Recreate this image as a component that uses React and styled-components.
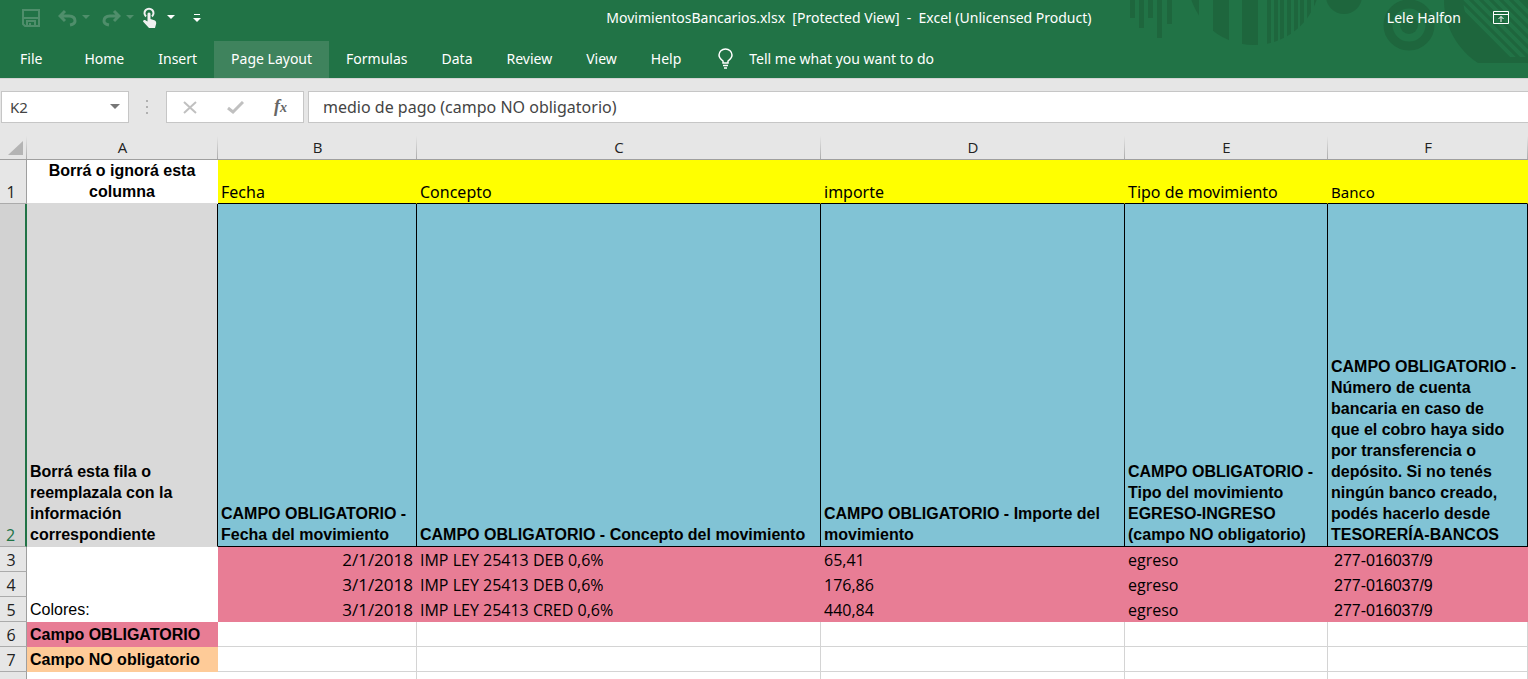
import React from 'react';
import styled, { createGlobalStyle } from 'styled-components';

const columns = ['A', 'B', 'C', 'D', 'E', 'F'];
const tabs = ['File', 'Home', 'Insert', 'Page Layout', 'Formulas', 'Data', 'Review', 'View', 'Help'];
const headings = ['Fecha', 'Concepto', 'importe', 'Tipo de movimiento', 'Banco'];

const hints = [
  'CAMPO OBLIGATORIO - Fecha del movimiento',
  'CAMPO OBLIGATORIO - Concepto del movimiento',
  'CAMPO OBLIGATORIO - Importe del movimiento',
  'CAMPO OBLIGATORIO - Tipo del movimiento EGRESO-INGRESO (campo NO obligatorio)',
  'CAMPO OBLIGATORIO -\nNúmero de cuenta\nbancaria en caso de\nque el cobro haya sido\npor transferencia o\ndepósito. Si no tenés\nningún banco creado,\npodés hacerlo desde\nTESORERÍA-BANCOS',
];

const movements = [
  { row: 3, date: '2/1/2018', concept: 'IMP LEY 25413 DEB 0,6%', amount: '65,41', type: 'egreso', bank: '277-016037/9' },
  { row: 4, date: '3/1/2018', concept: 'IMP LEY 25413 DEB 0,6%', amount: '176,86', type: 'egreso', bank: '277-016037/9' },
  { row: 5, date: '3/1/2018', concept: 'IMP LEY 25413 CRED 0,6%', amount: '440,84', type: 'egreso', bank: '277-016037/9' },
];

const legend = [
  { row: 6, text: 'Campo OBLIGATORIO', fill: '#e87d95' },
  { row: 7, text: 'Campo NO obligatorio', fill: '#fecb98' },
  { row: '', text: '', fill: '#ffffff' },
];

const TitleArt = () => (
  <Art width="400" height="78" viewBox="0 0 400 78" aria-hidden="true">
    <defs>
      <clipPath id="disc"><circle cx="126" cy="-21" r="66" /></clipPath>
      <clipPath id="inner"><path d="M335 0 C337 24 349 42 368 52 L377 57 H400 V0 Z" /></clipPath>
    </defs>
    <g fill="#1e663d">
      <path d="M2 0h5v18h-5z M11 0h5v28h-5z M20 0h5v18h-5z M29 0h5v38h-5z M39 0h5v24h-5z" />
      <path clipPath="url(#disc)" d="M60 0h11v60h-11z M85 0h16v60h-16z M114 0h16v60h-16z M139 0h4v60h-4z M146 0h4v60h-4z M152 0h4v60h-4z M159 0h4v60h-4z M166 0h4v60h-4z M172 0h4v60h-4z M179 0h4v60h-4z M186 0h4v60h-4z" />
      <circle cx="216" cy="-4" r="18" />
      <circle cx="281" cy="25" r="9" />
      <path d="M316 0 C316 27 330 50 350 63 H400 V0 Z" />
    </g>
    <circle cx="281" cy="25" r="21" fill="none" stroke="#1e663d" strokeWidth="9" />
    <g clipPath="url(#inner)" stroke="#217346" strokeWidth="4">
      <path d="M320 -8 L390 62 M330 -8 L400 62 M340 -8 L410 62 M350 -8 L420 62 M360 -8 L430 62 M370 -8 L440 62 M380 -8 L450 62" />
    </g>
  </Art>
);

const Caret = ({ light }) => (
  <svg width="8" height="5" viewBox="0 0 8 5" aria-hidden="true">
    <path d="M0 0h8L4 4z" fill={light ? '#ffffff' : '#4f8e6b'} />
  </svg>
);

const App = () => {
  return (
    <Page>
      <GlobalStyle />
      <Header>
        <TitleArt />
        <TitleBar>
          <QuickAccess>
            <ToolButton aria-label="Save">
              <svg width="18" height="18" viewBox="0 0 18 18" fill="none" stroke="#4f8e6b" strokeWidth="2">
                <path d="M1 1h16v16H3l-2-2z M1 9h16 M5 17v-5h8v5 M8 14v3" />
              </svg>
            </ToolButton>
            <ToolButton aria-label="Undo" $gap="5px" $before="18px">
              <svg width="19" height="18" viewBox="0 0 19 18" fill="none" stroke="#4f8e6b" strokeWidth="3">
                <path d="M7 2 2 7l5 5 M2 7h9q6 0 6 5 0 3-5 4" />
              </svg>
              <Caret />
            </ToolButton>
            <ToolButton aria-label="Redo" $gap="5px" $before="12px">
              <svg width="19" height="18" viewBox="0 0 19 18" fill="none" stroke="#4f8e6b" strokeWidth="3">
                <path d="M12 2l5 5-5 5 M17 7H8q-6 0-6 5 0 3 5 4" />
              </svg>
              <Caret />
            </ToolButton>
            <ToolButton aria-label="Touch mode" $gap="9px" $before="8px">
              <svg width="16" height="22" viewBox="0 0 16 22">
                <path d="M4 9.500a4.500 4.500 0 1 1 6 0" fill="none" stroke="#f0f0f0" strokeWidth="2" />
                <path d="M5.500 6.500q1.500-2 3 0V12l4.500 1.500q1.500 1 1.200 3L13 21H7l-6-6.500q0-2 2-1.500l2.500 1.500z" fill="#f0f0f0" />
              </svg>
              <Caret light />
            </ToolButton>
            <ToolButton aria-label="Customize toolbar" $before="18px">
              <svg width="8" height="8" viewBox="0 0 8 8" fill="#ffffff">
                <path d="M1 0h6v1H1z M0 4h8L4 8z" />
              </svg>
            </ToolButton>
          </QuickAccess>
          <Title>{'MovimientosBancarios.xlsx  [Protected View]  -  Excel (Unlicensed Product)'}</Title>
          <Account>
            <span>Lele Halfon</span>
            <ToolButton aria-label="Ribbon display options">
              <svg width="16" height="13" viewBox="0 0 16 13" fill="none" stroke="#ffffff">
                <path d="M.5.5h15v12H.5z M1 3.500h14 M8 11V5.500 M5.500 8 8 5.500 10.500 8" />
              </svg>
            </ToolButton>
          </Account>
        </TitleBar>
        <Ribbon>
          {tabs.map((tab) => (
            <Tab key={tab} $first={tab === 'File'} $active={tab === 'Page Layout'}>{tab}</Tab>
          ))}
          <TellMe>
            <svg width="15" height="21" viewBox="0 0 15 21" fill="none" stroke="#ffffff">
              <path strokeWidth="1.500" d="M5 15v-2Q1 10 1 7a6.500 6 0 0 1 13 0q0 3-4 6v2z M5 17.500h5 M6 20h3" />
            </svg>
            Tell me what you want to do
          </TellMe>
        </Ribbon>
      </Header>

      <FormulaBar>
        <NameBox>
          <input aria-label="Name box" defaultValue="K2" />
          <svg width="10" height="6" viewBox="0 0 10 6" aria-hidden="true"><path d="M0 0h10L5 5z" fill="#777777" /></svg>
        </NameBox>
        <Grip width="3" height="14" viewBox="0 0 3 14" aria-hidden="true">
          <path d="M0 0h2v2H0z M0 6h2v2H0z M0 12h2v2H0z" fill="#b0b0b0" />
        </Grip>
        <FormulaTools>
          <ToolButton aria-label="Cancel">
            <svg width="14" height="13" viewBox="0 0 14 13" stroke="#c0c0c0" strokeWidth="2"><path d="M1 1l12 11 M13 1 1 12" /></svg>
          </ToolButton>
          <ToolButton aria-label="Enter">
            <svg width="17" height="13" viewBox="0 0 17 13" fill="none" stroke="#c0c0c0" strokeWidth="3"><path d="M1 7l5 4L16 1" /></svg>
          </ToolButton>
          <FunctionButton aria-label="Insert function">f<small>x</small></FunctionButton>
        </FormulaTools>
        <FormulaInput aria-label="Formula" defaultValue="medio de pago (campo NO obligatorio)" />
      </FormulaBar>

      <Sheet>
        <Grid>
          <colgroup>
            <Col $w="27px" />
            <Col $w="191px" />
            <Col $w="199px" />
            <Col $w="404px" />
            <Col $w="304px" />
            <Col $w="203px" />
            <Col />
          </colgroup>
          <thead>
            <tr>
              <Corner>
                <svg width="16" height="15" viewBox="0 0 16 15" aria-hidden="true"><path d="M15 0v14H0z" fill="#b4b4b4" /></svg>
              </Corner>
              {columns.map((c) => <ColHead key={c} scope="col">{c}</ColHead>)}
            </tr>
          </thead>
          <tbody>
            <Row $h="44px">
              <RowHead scope="row">1</RowHead>
              <Note $center $line="#d9d9d9">Borrá o ignorá esta columna</Note>
              {headings.map((h) => <Heading key={h} $small={h === 'Banco'}>{h}</Heading>)}
            </Row>
            <Row $h="343px">
              <RowHead scope="row" $selected>2</RowHead>
              <Note $fill="#d9d9d9" $line="#d9d9d9" $edge="#000000">Borrá esta fila o reemplazala con la información correspondiente</Note>
              {hints.map((h) => <Hint key={h}>{h}</Hint>)}
            </Row>
            {movements.map((m) => (
              <Row key={m.row} $h="25px">
                <RowHead scope="row">{m.row}</RowHead>
                <Plain>{m.row === 5 ? 'Colores:' : ''}</Plain>
                <DateCell>{m.date}</DateCell>
                <Data>{m.concept}</Data>
                <Data>{m.amount}</Data>
                <Data>{m.type}</Data>
                <BankCell>{m.bank}</BankCell>
              </Row>
            ))}
            {legend.map((l) => (
              <Row key={l.fill} $h="25px">
                <RowHead scope="row">{l.row}</RowHead>
                <Note $fill={l.fill} $line={l.fill}>{l.text}</Note>
                {headings.map((h) => <Empty key={h} />)}
              </Row>
            ))}
          </tbody>
        </Grid>
      </Sheet>
    </Page>
  );
};

const GlobalStyle = createGlobalStyle`
*{
  box-sizing: border-box;
}

body{
  margin: 0;
  background-color: #e6e6e6;
}

button, input{
  border: 0;
  padding: 0;
  background: none;
  font: inherit;
  color: inherit;
}
`;

const Page = styled.div`
  height: 100vh;
  display: flex;
  flex-direction: column;
  overflow: hidden;
  font-family: "Noto Sans", "Open Sans", sans-serif;
  font-size: 14px;
`;

const Header = styled.header`
  position: relative;
  background-color: #217346;
  color: #ffffff;
`;

const Art = styled.svg`
  position: absolute;
  top: 0;
  right: 0;
`;

const TitleBar = styled.div`
  position: relative;
  height: 41px;
  padding: 0 19px 6px 22px;
  display: flex;
  align-items: center;
`;

const QuickAccess = styled.div`
  display: flex;
  align-items: center;
`;

const ToolButton = styled.button`
  display: flex;
  align-items: center;
  gap: ${({ $gap }) => $gap || 0};
  margin-left: ${({ $before }) => $before || 0};
`;

const Title = styled.div`
  flex: 1;
  padding-left: 110px;
  text-align: center;
  white-space: pre;
`;

const Account = styled.div`
  display: flex;
  align-items: center;
  gap: 32px;
`;

const Ribbon = styled.nav`
  position: relative;
  height: 37px;
  display: flex;
`;

const Tab = styled.button`
  padding: ${({ $first }) => ($first ? '0 20px 2px' : '0 17px 2px')};
  margin-right: ${({ $first }) => ($first ? '5px' : 0)};
  background-color: ${({ $active }) => ($active ? '#3f835d' : 'transparent')};
`;

const TellMe = styled.button`
  margin-left: 20px;
  padding-bottom: 2px;
  display: flex;
  align-items: center;
  gap: 16px;
`;

const FormulaBar = styled.div`
  height: 58px;
  padding: 12px 0 13px 1px;
  display: flex;
  background-color: #e6e6e6;
  border-top: 1px solid #d4d4d4;
  color: #444444;
`;

const NameBox = styled.div`
  width: 128px;
  padding: 0 8px;
  display: flex;
  align-items: center;
  background-color: #ffffff;
  border: 1px solid #c6c6c6;

  input{
    width: 100%;
    min-width: 0;
    font-size: 15px;
  }

  svg{
    flex: none;
  }
`;

const Grip = styled.svg`
  margin: auto 17px;
`;

const FormulaTools = styled.div`
  width: 138px;
  margin-right: 4px;
  display: flex;
  align-items: center;
  justify-content: space-between;
  padding: 0 16px;
  background-color: #ffffff;
  border: 1px solid #c6c6c6;
`;

const FunctionButton = styled.button`
  font-family: "Liberation Serif", serif;
  font-style: italic;
  font-weight: bold;
  font-size: 18px;
  line-height: 20px;
  color: #666666;

  small{
    font-size: 14px;
  }
`;

const FormulaInput = styled.input`
  flex: 1;
  min-width: 0;
  padding: 0 14px;
  background-color: #ffffff;
  border: 1px solid #c6c6c6;
  border-right: 0;
  font-size: 16px;
`;

const Sheet = styled.main`
  flex: 1;
  min-height: 0;
  overflow: hidden;
  background-color: #ffffff;
`;

const Grid = styled.table`
  width: 100%;
  table-layout: fixed;
  border-collapse: separate;
  border-spacing: 0;
`;

const Col = styled.col`
  width: ${({ $w }) => $w || 'auto'};
`;

const Row = styled.tr`
  height: ${({ $h }) => $h};
`;

const ColHead = styled.th`
  height: 24px;
  padding: 0;
  background: #e6e6e6 linear-gradient(#e6e6e6, #ababab) right / 1px 100% no-repeat;
  border-bottom: 1px solid #9f9f9f;
  font-family: "Open Sans", "Noto Sans", sans-serif;
  font-size: 15px;
  font-weight: normal;
  line-height: 21px;
  color: #222222;
`;

const Corner = styled(ColHead)`
  text-align: right;
  vertical-align: bottom;
  line-height: 0;

  svg{
    margin: 0 3px 3px 0;
  }
`;

const RowHead = styled.th`
  padding: 0 4px 0 0;
  vertical-align: bottom;
  background-color: ${({ $selected }) => ($selected ? '#d2d2d2' : '#e6e6e6')};
  border-right: ${({ $selected }) => ($selected ? '2px solid #217346' : '1px solid #9f9f9f')};
  border-bottom: 1px solid #ababab;
  font-family: "Open Sans", "Noto Sans", sans-serif;
  font-size: 16px;
  font-weight: normal;
  line-height: 22px;
  color: ${({ $selected }) => ($selected ? '#217346' : '#222222')};
`;

const Cell = styled.td`
  padding: 0 3px;
  vertical-align: bottom;
  border-right: 1px solid #d4d4d4;
  border-bottom: 1px solid #d4d4d4;
  font-size: 16px;
  line-height: 21px;
  color: #000000;
`;

const Note = styled(Cell)`
  padding-bottom: 1px;
  font-family: "Liberation Sans", Arial, sans-serif;
  font-weight: bold;
  text-align: ${({ $center }) => ($center ? 'center' : 'left')};
  background-color: ${({ $fill }) => $fill || '#ffffff'};
  border-bottom-color: ${({ $line }) => $line};
  border-right-color: ${({ $edge, $fill }) => $edge || $fill || '#ffffff'};
`;

const Heading = styled(Cell)`
  background-color: #ffff00;
  border-right-color: #ffff00;
  border-bottom-color: #000000;
  font-size: ${({ $small }) => ($small ? '15px' : '16px')};
`;

const Hint = styled(Cell)`
  padding: 0 2px 1px 3px;
  font-family: "Liberation Sans", Arial, sans-serif;
  font-weight: bold;
  white-space: pre-line;
  background-color: #81c3d5;
  border-color: #000000;
`;

const Plain = styled(Cell)`
  padding-bottom: 1px;
  font-family: "Liberation Sans", Arial, sans-serif;
  border-color: #ffffff;
`;

const Data = styled(Cell)`
  font-family: "Open Sans", "Noto Sans", sans-serif;
  background-color: #e87d95;
  border-color: #e87d95;
`;

const DateCell = styled(Data)`
  padding-bottom: 1px;
  font-size: 17px;
  text-align: right;
`;

const BankCell = styled(Data)`
  padding-left: 6px;
  font-family: "Liberation Sans", Arial, sans-serif;
`;

const Empty = styled(Cell)`
  background-color: #ffffff;
`;

export default App;
